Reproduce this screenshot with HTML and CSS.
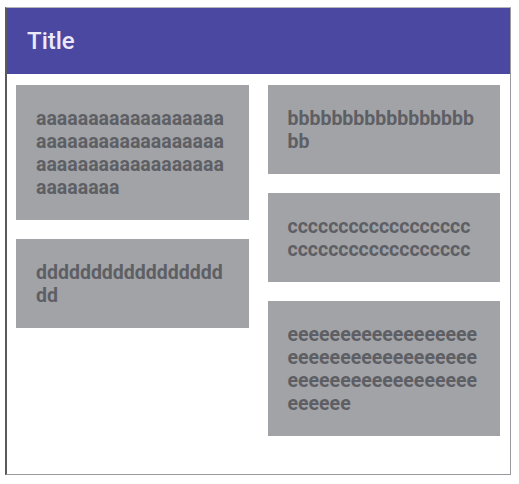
FILE: index.html
```html
<!DOCTYPE html>
<html lang="en">
<head>
  <meta charset="UTF-8">
  <title>Title</title>
  <link rel="stylesheet" href="styles.css">
</head>
<body>

  <div class="frame">
    <header class="app-bar">Title</header>

    <div class="grid">
      <div class="column">
        <div class="card">aaaaaaaaaaaaaaaaaaaaaaaaaaaaaaaaaaaaaaaaaaaaaaaaaaaaaaaaaaaaaa</div>
        <div class="card">ddddddddddddddddddd</div>
      </div>
      <div class="column">
        <div class="card">bbbbbbbbbbbbbbbbbbb</div>
        <div class="card">cccccccccccccccccccccccccccccccccccc</div>
        <div class="card">eeeeeeeeeeeeeeeeeeeeeeeeeeeeeeeeeeeeeeeeeeeeeeeeeeeeeeeeeeee</div>
      </div>
    </div>
  </div>

</body>
</html>
```

FILE: styles.css
```css
body { font-family: Roboto, "Noto Sans", sans-serif; background: #fff; margin: 0; padding: 7px 0 0 5px; }
.frame {
  width: 503px;
  height: 466px;
  border-top: 1px solid #b4b4b8;
  border-left: 2px solid #5a5a5e;
  border-right: 1px solid #9a9a9e;
  border-bottom: 1px solid #9a9a9e;
  display: flex;
  flex-direction: column;
}
.app-bar {
  height: 66px;
  line-height: 66px;
  background: #4b48a1;
  color: #ebe8fa;
  font-size: 24px;
  font-weight: 500;
  padding-left: 20px;
}
.grid {
  display: flex;
  gap: 19px;
  padding: 11px 10px 0 9px;
  align-items: flex-start;
}
.column {
  flex: 1;
  display: flex;
  flex-direction: column;
  gap: 19px;
}
.card {
  background: #a2a3a7;
  color: #5e5f64;
  font-size: 19.5px;
  font-weight: 700;
  line-height: 23px;
  padding: 22px 20px 21px;
  word-break: break-all;
}
```
